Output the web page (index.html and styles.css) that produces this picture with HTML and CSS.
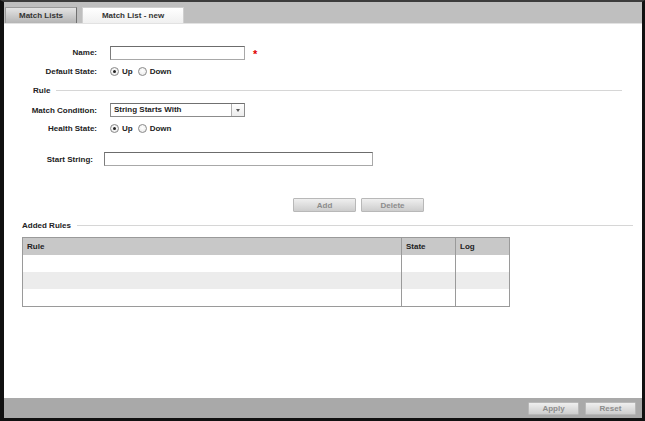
FILE: index.html
```html
<!DOCTYPE html>
<html>
<head>
<meta charset="utf-8">
<link rel="stylesheet" href="styles.css">
</head>
<body>
<div class="frame">
  <div class="tabbar">
    <div class="tab">Match Lists</div>
    <div class="tab active">Match List - new</div>
  </div>
  <div class="main">
    <div class="row name-row">
      <div class="label">Name:</div>
      <div class="field"><span class="input name-input"></span><span class="req">*</span></div>
    </div>
    <div class="row radio-row">
      <div class="label">Default State:</div>
      <div class="field">
        <span class="radio checked"></span><span class="rtext">Up</span>
        <span class="radio"></span><span class="rtext">Down</span>
      </div>
    </div>
    <div class="section rule-section">
      <span class="section-title">Rule</span><span class="section-line"></span>
    </div>
    <div class="row select-row">
      <div class="label">Match Condition:</div>
      <div class="field">
        <div class="select"><span class="select-text">String Starts With</span><span class="select-arrow"><span class="tri"></span></span></div>
      </div>
    </div>
    <div class="row radio-row health-row">
      <div class="label">Health State:</div>
      <div class="field">
        <span class="radio checked"></span><span class="rtext">Up</span>
        <span class="radio"></span><span class="rtext">Down</span>
      </div>
    </div>
    <div class="row start-row">
      <div class="label short">Start String:</div>
      <div class="field"><span class="input start-input"></span></div>
    </div>
    <div class="btn-row">
      <span class="btn">Add</span>
      <span class="btn">Delete</span>
    </div>
    <div class="section added-section">
      <span class="section-title">Added Rules</span><span class="section-line"></span>
    </div>
    <table class="rules">
      <thead>
        <tr><th class="c-rule">Rule</th><th class="c-state">State</th><th class="c-log">Log</th></tr>
      </thead>
      <tbody>
        <tr><td></td><td></td><td></td></tr>
        <tr class="alt"><td></td><td></td><td></td></tr>
        <tr><td></td><td></td><td></td></tr>
      </tbody>
    </table>
  </div>
  <div class="footer">
    <span class="btn fbtn">Apply</span>
    <span class="btn fbtn">Reset</span>
  </div>
</div>
</body>
</html>
```
FILE: styles.css
```css
html, body {
  margin: 0;
  padding: 0;
  background: #ffffff;
}
body {
  font-family: "Liberation Sans", Arial, sans-serif;
  font-size: 8px;
  font-weight: bold;
  color: #222222;
}
.frame {
  width: 645px;
  height: 421px;
  box-sizing: border-box;
  border-left: 4px solid #111111;
  border-right: 3px solid #111111;
  border-top: 2px solid #3c3c3c;
  border-bottom: 3px solid #111111;
  display: flex;
  flex-direction: column;
  background: #ffffff;
}
.tabbar {
  height: 21px;
  background: #bfbfbf;
  border-bottom: 1px solid #e2e2e2;
  display: flex;
  align-items: flex-end;
  padding-left: 1px;
  gap: 5px;
  flex: none;
}
.tab {
  height: 16px;
  box-sizing: border-box;
  width: 72px;
  display: flex;
  align-items: center;
  justify-content: center;
  color: #333333;
  background: linear-gradient(#e4e4e4, #b4b4b4);
  border: 1px solid #9a9a9a;
  border-bottom: none;
  border-right-color: #707070;
}
.tab.active {
  width: 102px;
  background: linear-gradient(#ffffff, #f0f0f0);
  border-color: #d0d0d0;
}
.main {
  flex: 1;
  display: flex;
  flex-direction: column;
  padding-top: 21px;
}
.row {
  display: flex;
  align-items: center;
  height: 15px;
}
.label {
  width: 93px;
  text-align: right;
  flex: none;
  margin-right: 13px;
}
.label.short {
  width: 89px;
  margin-right: 11px;
}
.field {
  display: flex;
  align-items: center;
}
.input {
  display: block;
  height: 14px;
  box-sizing: border-box;
  border: 1px solid #a8a8a8;
  border-top-color: #6c6c6c;
  border-left-color: #7c7c7c;
  background: #ffffff;
}
.name-input {
  width: 135px;
}
.req {
  color: #e00000;
  font-size: 11px;
  margin-left: 8px;
  margin-top: 2px;
}
.radio-row {
  margin-top: 4px;
}
.radio {
  width: 9px;
  height: 9px;
  box-sizing: border-box;
  border-radius: 50%;
  border: 1px solid #8a8a8a;
  background: radial-gradient(circle at 50% 40%, #ffffff, #e6e6e6);
  display: inline-flex;
  align-items: center;
  justify-content: center;
  margin-right: 3px;
}
.radio.checked::after {
  content: "";
  width: 3px;
  height: 3px;
  border-radius: 50%;
  background: #222222;
}
.rtext {
  margin-right: 5px;
}
.section {
  display: flex;
  align-items: center;
  height: 12px;
}
.section-title {
  flex: none;
}
.section-line {
  height: 1px;
  background: #d6d6d6;
}
.rule-section {
  margin-top: 5px;
  padding-left: 29px;
}
.rule-section .section-line {
  margin-left: 6px;
  width: 566px;
}
.select-row {
  margin-top: 7px;
  height: 14px;
}
.select {
  width: 135px;
  height: 14px;
  box-sizing: border-box;
  border: 1px solid #8c8c8c;
  border-top-color: #707070;
  display: flex;
  background: #ffffff;
}
.select-text {
  flex: 1;
  padding-left: 3px;
  line-height: 12px;
}
.select-arrow {
  width: 12px;
  border-left: 1px solid #b0b0b0;
  display: flex;
  align-items: center;
  justify-content: center;
  background: linear-gradient(#ffffff, #ececec);
}
.tri {
  width: 0;
  height: 0;
  border-left: 2.5px solid transparent;
  border-right: 2.5px solid transparent;
  border-top: 3px solid #555555;
}
.health-row {
  margin-top: 4px;
}
.start-row {
  margin-top: 16px;
  height: 14px;
}
.start-input {
  width: 269px;
}
.btn-row {
  display: flex;
  gap: 5px;
  margin-top: 32px;
  padding-left: 289px;
}
.btn {
  display: inline-flex;
  align-items: center;
  justify-content: center;
  width: 63px;
  height: 14px;
  box-sizing: border-box;
  border: 1px solid #b8b8b8;
  border-radius: 1px;
  background: linear-gradient(#efefef, #cdcdcd);
  color: #8c8c8c;
}
.added-section {
  margin-top: 7px;
  padding-left: 18px;
}
.added-section .section-line {
  margin-left: 6px;
  width: 556px;
}
.rules {
  margin-top: 6px;
  margin-left: 18px;
  width: 488px;
  border-collapse: collapse;
  border: 1px solid #9a9a9a;
  table-layout: fixed;
}
.rules th {
  background: #c8c8c8;
  height: 17px;
  padding: 0 0 0 4px;
  text-align: left;
  font-weight: bold;
  border-left: 1px solid #9a9a9a;
  box-sizing: border-box;
}
.rules td {
  height: 17px;
  padding: 0;
  border-left: 1px solid #9a9a9a;
}
.rules tr.alt td {
  background: #ececec;
}
.c-rule { width: 379px; }
.c-state { width: 54px; }
.c-log { width: 54px; }
.footer {
  height: 20px;
  background: #a9a9a9;
  display: flex;
  align-items: center;
  justify-content: flex-end;
  gap: 6px;
  padding-right: 6px;
  flex: none;
}
.fbtn {
  width: 51px;
  height: 13px;
}
```
